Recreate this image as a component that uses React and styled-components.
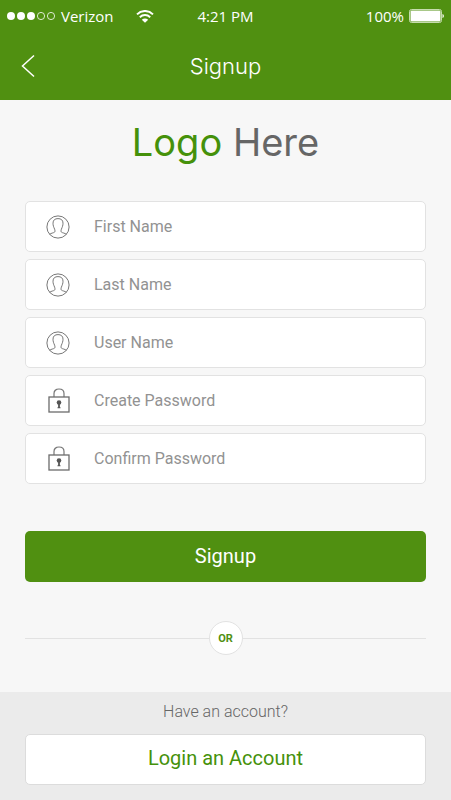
import React from "react";
import styled, { createGlobalStyle } from "styled-components";

const GlobalStyle = createGlobalStyle`
  *, *::before, *::after {
    box-sizing: border-box;
  }

  html, body, #root {
    height: 100%;
  }

  body {
    margin: 0;
    background: #f7f7f7;
    font-family: Roboto, "Liberation Sans", sans-serif;
  }

  button, input {
    font: inherit;
  }
`;

const Screen = styled.div`
  display: flex;
  flex-direction: column;
  min-height: 100%;
`;

const Header = styled.header`
  background: #509011;
  color: #fff;
`;

const StatusBar = styled.div`
  display: grid;
  grid-template-columns: 1fr auto 1fr;
  align-items: center;
  height: 32px;
  padding: 0 7px;
  font-family: "Open Sans", sans-serif;
  font-size: 15px;
  line-height: 20px;
`;

const Carrier = styled.div`
  display: flex;
  align-items: center;
  gap: 6px;

  svg:last-child {
    margin-left: 16px;
  }
`;

const Battery = styled.div`
  display: flex;
  align-items: center;
  justify-content: flex-end;
  gap: 5px;
`;

const TitleBar = styled.div`
  display: grid;
  grid-template-columns: 40px 1fr 40px;
  align-items: center;
  height: 68px;
  padding: 0 8px;
`;

const BackButton = styled.button`
  display: flex;
  align-items: center;
  justify-content: center;
  width: 40px;
  height: 40px;
  padding: 0;
  border: 0;
  background: none;
  color: inherit;
  cursor: pointer;
`;

const Title = styled.h1`
  margin: 0;
  font-family: Inter, sans-serif;
  font-size: 22px;
  font-weight: 300;
  line-height: 32px;
  text-align: center;
`;

const Main = styled.main`
  flex: 1;
  padding: 18px 25px 0;
`;

const Logo = styled.div`
  margin-bottom: 35px;
  color: #666;
  font-family: Inter, sans-serif;
  font-size: 38px;
  font-weight: 400;
  line-height: 48px;
  text-align: center;

  span {
    color: #45910a;
  }
`;

const Form = styled.form`
  display: flex;
  flex-direction: column;
  gap: 7px;
`;

const Field = styled.label`
  display: flex;
  align-items: center;
  height: 51px;
  padding: 0 20px;
  border: 1px solid #e2e2e2;
  border-radius: 5px;
  background: #fff;
`;

const FieldIcon = styled.span`
  display: flex;
  flex: none;
  margin-right: 24px;
`;

const Input = styled.input`
  flex: 1;
  min-width: 0;
  padding: 0;
  border: 0;
  outline: 0;
  background: none;
  color: #666;
  font-size: 16px;
  line-height: 24px;

  &::placeholder {
    color: #929292;
    opacity: 1;
  }
`;

const SubmitButton = styled.button`
  height: 51px;
  margin-top: 40px;
  padding: 0 0 2px;
  border: 0;
  border-radius: 5px;
  background: #509011;
  color: #fff;
  font-size: 20px;
  line-height: 24px;
  cursor: pointer;
`;

const Divider = styled.div`
  display: flex;
  align-items: center;
  margin: 39px 0 37px;

  &::before,
  &::after {
    content: "";
    flex: 1;
    height: 1px;
    background: #e2e2e2;
  }
`;

const Or = styled.span`
  width: 34px;
  height: 34px;
  border: 1px solid #e2e2e2;
  border-radius: 50%;
  background: #fff;
  color: #509011;
  font-size: 11px;
  font-weight: 700;
  line-height: 34px;
  text-align: center;
`;

const Footer = styled.footer`
  padding: 8px 25px 15px;
  background: #ebebeb;
  text-align: center;
`;

const Hint = styled.p`
  margin: 0 0 10px;
  color: #666;
  font-size: 16px;
  font-weight: 300;
  line-height: 24px;
`;

const LoginLink = styled.a`
  display: block;
  padding: 11px 0 14px;
  border: 1px solid #dcdcdc;
  border-radius: 5px;
  background: #fff;
  color: #45910a;
  font-size: 20px;
  line-height: 24px;
  text-decoration: none;
`;

const SignalIcon = () => (
  <svg width="48" height="10" viewBox="0 0 48 10" aria-hidden="true">
    {[0, 1, 2, 3, 4].map((i) => (
      <circle
        key={i}
        cx={4 + i * 10}
        cy="5"
        r={i < 3 ? 4 : 3.6}
        fill={i < 3 ? "#fff" : "none"}
        stroke={i < 3 ? "none" : "#fff"}
        strokeWidth="0.8"
      />
    ))}
  </svg>
);

const WifiIcon = () => (
  <svg width="18" height="13" viewBox="0 0 18 13" fill="none" aria-hidden="true">
    <path
      d="M1 4.3C5.5-.2 12.5-.2 17 4.3M3.8 7.2c3-2.9 7.4-2.9 10.4 0"
      stroke="#fff"
      strokeWidth="1.9"
    />
    <path d="M5.8 9.8c2-1.8 4.4-1.8 6.4 0L9 12.8z" fill="#fff" />
  </svg>
);

const BatteryIcon = () => (
  <svg width="35" height="14" viewBox="0 0 35 14" fill="none" aria-hidden="true">
    <rect x=".5" y=".5" width="32" height="13" rx="2" stroke="#c6dcae" />
    <rect x="1.5" y="1.5" width="30" height="11" rx="1" fill="#fff" />
    <path d="M33.5 5c1.8.6 1.8 3.4 0 4z" fill="#fff" />
  </svg>
);

const BackIcon = () => (
  <svg width="14" height="24" viewBox="0 0 14 24" fill="none" aria-hidden="true">
    <path d="M13 1.5 1.5 12 13 22.5" stroke="#fff" strokeWidth="1.5" />
  </svg>
);

const UserIcon = () => (
  <svg width="24" height="24" viewBox="0 0 24 24" fill="none" aria-hidden="true">
    <g stroke="#777">
      <circle cx="12" cy="12" r="11.1" />
      <path d="M3.6 19.3c1.4-1.2 3.9-1.3 5-2.2.6-.6.4-1.9 0-2.9C7.7 12 7 10.5 7 8.2 7 5 9 3.6 12 3.6s5 1.4 5 4.6c0 2.3-.7 3.8-1.6 6-.4 1-.6 2.3 0 2.9 1.1.9 3.600 1 5 2.200" />
    </g>
  </svg>
);

const LockIcon = () => (
  <svg width="24" height="25" viewBox="-2 0 24 25" fill="none" aria-hidden="true">
    <path d="M6 9V5.5C6 2.7 8.2 1 11 1s5 1.700 5 4.500V9" stroke="#777" strokeWidth="1.2" />
    <rect x="1" y="9" width="20" height="15" stroke="#6c6c6c" strokeWidth="1.3" />
    <circle cx="11" cy="14.5" r="2.3" fill="#555" />
    <path d="M10.1 15h1.8v4.2h.6v1h-3v-1h.6z" fill="#555" />
  </svg>
);

const FIELDS = [
  { name: "firstName", label: "First Name", type: "text" },
  { name: "lastName", label: "Last Name", type: "text" },
  { name: "userName", label: "User Name", type: "text" },
  { name: "password", label: "Create Password", type: "password" },
  { name: "confirmPassword", label: "Confirm Password", type: "password" },
];

const App = () => {
  const onSubmit = (event) => event.preventDefault();

  return (
    <>
      <GlobalStyle />
      <Screen>
        <Header>
          <StatusBar>
            <Carrier>
              <SignalIcon />
              Verizon
              <WifiIcon />
            </Carrier>
            <span>4:21 PM</span>
            <Battery>
              100%
              <BatteryIcon />
            </Battery>
          </StatusBar>
          <TitleBar>
            <BackButton type="button" aria-label="Back">
              <BackIcon />
            </BackButton>
            <Title>Signup</Title>
          </TitleBar>
        </Header>
        <Main>
          <Logo>
            <span>Logo</span> Here
          </Logo>
          <Form onSubmit={onSubmit}>
            {FIELDS.map(({ name, label, type }) => (
              <Field key={name} htmlFor={name}>
                <FieldIcon>
                  {type === "password" ? <LockIcon /> : <UserIcon />}
                </FieldIcon>
                <Input id={name} name={name} type={type} placeholder={label} aria-label={label} />
              </Field>
            ))}
            <SubmitButton type="submit">Signup</SubmitButton>
          </Form>
          <Divider>
            <Or>OR</Or>
          </Divider>
        </Main>
        <Footer>
          <Hint>Have an account?</Hint>
          <LoginLink href="#login">Login an Account</LoginLink>
        </Footer>
      </Screen>
    </>
  );
};
export default App;
